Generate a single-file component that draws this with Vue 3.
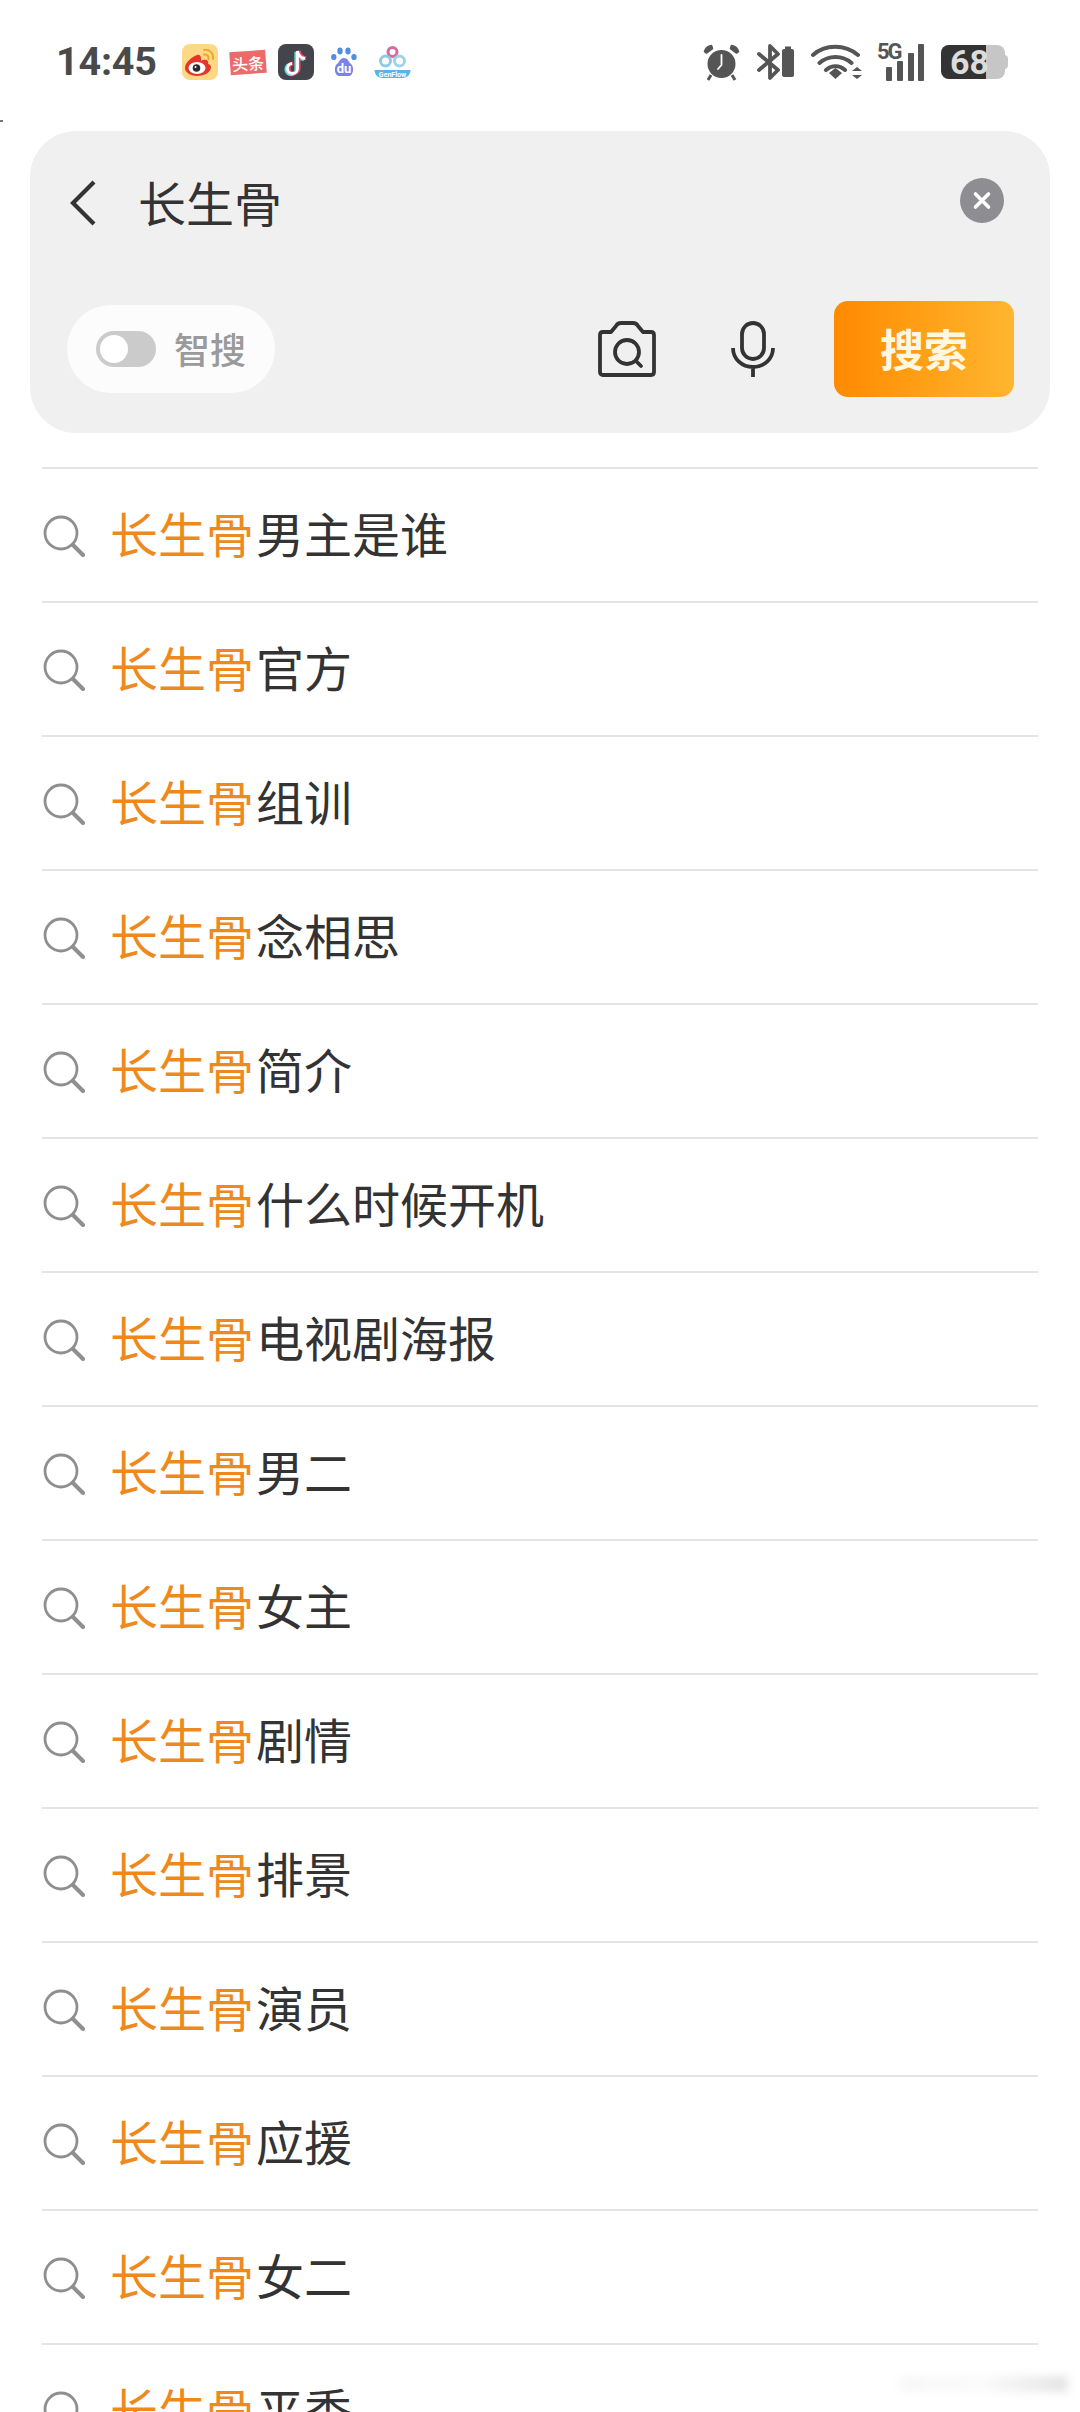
<script setup>
const rows = ['男主是谁','官方','组训','念相思','简介','什么时候开机','电视剧海报','男二','女主','剧情','排景','演员','应援','女二','平秀']
</script>

<template>
  <div class="page">
    <header class="status">
      <span class="time">14:45</span>
      <div class="apps">
        <svg class="ic weibo" viewBox="0 0 36 36">
          <rect width="36" height="36" rx="8" fill="#fdd985"/>
          <path d="M15 11c-6 2-12 8-12 13 0 4 5 8 12 8 8 0 14-4 14-9 0-2-2-3-3-3 1-3-1-5-5-4-1 0-2 1-2 1 .5-5-1-7-4-6z" fill="#e6352b"/>
          <ellipse cx="15" cy="24" rx="8.500" ry="6" fill="#fff"/>
          <circle cx="14.500" cy="24" r="3.800" fill="#2b2b2b"/>
          <circle cx="13.500" cy="23" r="1" fill="#fff"/>
          <path d="M22 6c5-1 10 3 9 9M22 10.500c3-.5 5 1.500 4.500 4.500" fill="none" stroke="#eda62b" stroke-width="2" stroke-linecap="round"/>
        </svg>
        <div class="toutiao"><span>头条</span></div>
        <svg class="ic tiktok" viewBox="0 0 36 36">
          <rect width="36" height="36" rx="8" fill="#44444c"/>
          <path d="M19.500 7v17.500a5 5 0 1 1-5.500-5M19.500 7c.5 4 3.500 7 7.500 7.500" fill="none" stroke="#5ee5e0" stroke-width="3.800" transform="translate(-1.200 .8)"/>
          <path d="M19.500 7v17.500a5 5 0 1 1-5.500-5M19.500 7c.5 4 3.500 7 7.500 7.500" fill="none" stroke="#f0476b" stroke-width="3.800" transform="translate(1.200 -.2)"/>
          <path d="M19.500 7v17.500a5 5 0 1 1-5.500-5M19.500 7c.5 4 3.500 7 7.500 7.500" fill="none" stroke="#fff" stroke-width="2.800"/>
        </svg>
        <svg class="ic baidu" viewBox="0 0 26 30">
          <ellipse cx="2.800" cy="10" rx="2.700" ry="3.100" fill="#4f8de8"/>
          <ellipse cx="9" cy="4" rx="2.700" ry="3.400" fill="#4f8de8"/>
          <ellipse cx="17" cy="4" rx="2.700" ry="3.400" fill="#4f8de8"/>
          <ellipse cx="23" cy="10" rx="2.700" ry="3.100" fill="#4f8de8"/>
          <path d="M13 11c-4 0-4.500 4-7 6-3.500 2.500-2.500 12 2 12h10c4.500 0 5.500-9.500 2-12-2.500-2-3-6-7-6z" fill="#7d83e6"/>
          <text x="13" y="26" text-anchor="middle" class="du">du</text>
        </svg>
        <svg class="ic genflow" viewBox="0 0 36 33">
          <circle cx="18" cy="6" r="4.500" fill="none" stroke="#d66a9a" stroke-width="3"/>
          <circle cx="11" cy="15" r="5" fill="none" stroke="#8fcbe6" stroke-width="3"/>
          <circle cx="25" cy="15" r="5" fill="none" stroke="#9ed3e8" stroke-width="3"/>
          <path d="M0 24h36c0 5-4 8-8 8H8c-4 0-8-3-8-8z" fill="#5cb3ea"/>
          <text x="18" y="30.500" text-anchor="middle" class="gf">GenFlow</text>
        </svg>
      </div>
      <div class="sys">
        <svg class="alarm" viewBox="0 0 37 38">
          <circle cx="18.500" cy="21" r="14" fill="#555"/>
          <path d="M1.500 8.500c1-3.500 3.500-5.500 7-6l1 3-6 4.500zM35.500 8.500c-1-3.500-3.500-5.500-7-6l-1 3 6 4.500z" fill="#555" stroke="#555" stroke-width="1.600" stroke-linejoin="round"/>
          <path d="M8 32l-3 5M29 32l3 5" stroke="#555" stroke-width="3"/>
          <path d="M18.500 12v10l-3.500 4" fill="none" stroke="#fff" stroke-width="1.800" stroke-linecap="round"/>
        </svg>
        <svg class="bt" viewBox="0 0 38 38">
          <path d="M2 11l19 16-8 8V3l8 8L2 27" fill="none" stroke="#555" stroke-width="3.800" stroke-linecap="round" stroke-linejoin="round"/>
          <rect x="25" y="6" width="12" height="28" rx="2" fill="#555"/>
          <rect x="28" y="3.500" width="6" height="3" fill="#555"/>
        </svg>
        <svg class="wifi" viewBox="0 0 52 38">
          <path d="M2 12c12-11 32-11 45 0M8.500 20c9-8 23-8 32 0M15 27c6-5 13-5 19 0" fill="none" stroke="#555" stroke-width="4" stroke-linecap="round"/>
          <path d="M18 30l6.500-5 6.500 5-6.500 6z" fill="#555"/>
          <path d="M41 28l5-4 5 4zM41 32l5 4 5-4z" fill="#555"/>
        </svg>
        <div class="signal">
          <span class="five">5G</span>
          <svg viewBox="0 0 40 37">
            <rect x="1" y="23" width="6" height="14" rx="1" fill="#555"/>
            <rect x="12" y="17" width="6" height="20" rx="1" fill="#555"/>
            <rect x="23" y="9" width="6" height="28" rx="1" fill="#555"/>
            <rect x="33" y="0" width="6" height="37" rx="1" fill="#555"/>
          </svg>
        </div>
        <div class="battery">
          <div class="fill"></div>
          <div class="tip"></div>
          <span>68</span>
        </div>
      </div>
    </header>

    <section class="panel">
      <div class="query">
        <svg class="back" viewBox="0 0 28 46">
          <path d="M25 2L4 23l21 21" fill="none" stroke="#333" stroke-width="4.200"/>
        </svg>
        <span class="q">长生骨</span>
        <div class="clear">
          <svg viewBox="0 0 44 45">
            <path d="M15.500 16l13 13M28.500 16l-13 13" stroke="#fff" stroke-width="3.600" stroke-linecap="round"/>
          </svg>
        </div>
      </div>
      <div class="tools">
        <div class="pill">
          <div class="switch"><div class="knob"></div></div>
          <span>智搜</span>
        </div>
        <div class="actions">
          <svg class="cam" viewBox="0 0 60 56">
            <path d="M3 14c0-2 1-3 3-3h8l5-6c1-2 3-3 5-3h12c2 0 4 1 5 3l5 6h8c2 0 3 1 3 3v37c0 2-1 3-3 3H6c-2 0-3-1-3-3z" fill="none" stroke="#333" stroke-width="3.800" stroke-linejoin="round"/>
            <circle cx="30" cy="31" r="12" fill="none" stroke="#333" stroke-width="3.800"/>
            <path d="M39 40l5 5" stroke="#333" stroke-width="3.800" stroke-linecap="round"/>
          </svg>
          <svg class="mic" viewBox="0 0 44 56">
            <rect x="11" y="2" width="22" height="36" rx="11" fill="none" stroke="#333" stroke-width="3.800"/>
            <path d="M2 27c0 11 9 19 20 19s20-8 20-19M22 46v10" fill="none" stroke="#333" stroke-width="3.800"/>
          </svg>
          <button class="go">搜索</button>
        </div>
      </div>
    </section>

    <ul class="list">
      <li v-for="r in rows" :key="r" class="row">
        <svg class="mag" viewBox="0 0 42 42">
          <circle cx="18" cy="18" r="16" fill="none" stroke="#8f8f8f" stroke-width="2.800"/>
          <path d="M30 30l10 10" stroke="#8f8f8f" stroke-width="4" stroke-linecap="round"/>
        </svg>
        <span class="txt"><em>长生骨</em>{{ r }}</span>
      </li>
    </ul>
    <div class="speck"></div>
    <div class="smudge"></div>
  </div>
</template>

<style>
html, body { margin: 0; background: #fff; }
</style>

<style scoped>
.page {
  position: relative;
  width: 1080px;
  height: 2412px;
  overflow: hidden;
  background: #fff;
  font-family: "Noto Sans CJK SC", "Noto Sans", sans-serif;
}
.status {
  box-sizing: border-box;
  height: 131px;
  padding: 0 75px 7px 56px;
  display: flex;
  align-items: center;
}
.time {
  font: 700 39.500px/1 Roboto, sans-serif;
  color: #4a4a4a;
  width: 126px;
  letter-spacing: -.2px;
}
.apps {
  display: flex;
  align-items: center;
  flex: 1;
}
.ic { display: block; }
.weibo { width: 36px; height: 36px; }
.toutiao {
  width: 36px;
  height: 23px;
  margin-left: 12px;
  background: #ee6a6a;
  transform: rotate(-4deg);
  display: flex;
  align-items: center;
  justify-content: center;
}
.toutiao span { font-size: 16px; line-height: 1; font-weight: 500; color: #fff; }
.tiktok { width: 36px; height: 36px; margin-left: 12px; }
.baidu { width: 26px; height: 30px; margin-left: 17px; }
.genflow { width: 37px; height: 33px; margin-left: 17px; }
.du { font: 700 13px Roboto, sans-serif; fill: #fff; }
.gf { font: 700 7px Roboto, sans-serif; fill: #fff; }
.sys { display: flex; align-items: center; }
.alarm { width: 37px; height: 38px; }
.bt { width: 38px; height: 38px; margin-left: 17px; }
.wifi { width: 52px; height: 38px; margin-left: 16px; }
.signal { position: relative; width: 48px; height: 37px; margin-left: 14px; }
.signal svg { position: absolute; right: 0; top: 0; width: 40px; height: 37px; }
.five {
  position: absolute;
  left: 0;
  top: -3px;
  font: 700 22px/1 Roboto, sans-serif;
  letter-spacing: -2px;
  color: #555;
  background: #fff;
  padding-right: 1px;
}
.battery {
  position: relative;
  margin-left: 16px;
  width: 64px;
  height: 34px;
  display: flex;
  align-items: center;
  justify-content: center;
  border-radius: 8px;
  background: #c6c6c6;
}
.fill { position: absolute; left: 0; top: 0; bottom: 0; width: 45px; background: #333; border-radius: 8px 0 0 8px; }
.tip { position: absolute; right: -3px; top: 10px; width: 4px; height: 14px; background: #c6c6c6; border-radius: 0 4px 4px 0; }
.battery span {
  position: relative;
  font: 700 34px/1 Roboto, sans-serif;
  color: #dcdcdc;
  margin-left: -7px;
}
.panel {
  box-sizing: border-box;
  margin: 0 30px;
  height: 302px;
  padding: 41px 36px 36px 37px;
  background: #f0f0f0;
  border-radius: 46px;
  display: flex;
  flex-direction: column;
  justify-content: space-between;
}
.query { display: flex; align-items: center; height: 62px; }
.back { width: 28px; height: 46px; margin-left: 2px; }
.q { font-size: 48px; line-height: 62px; color: #333; margin-left: 41px; flex: 1; margin-top: -4px; }
.clear {
  width: 44px;
  height: 45px;
  margin-right: 10px;
  margin-top: -6px;
  border-radius: 50%;
  background: #8e8e92;
}
.clear svg { display: block; width: 44px; height: 45px; }
.tools { display: flex; align-items: center; justify-content: space-between; }
.pill {
  box-sizing: border-box;
  width: 208px;
  height: 88px;
  padding-left: 29px;
  border-radius: 44px;
  background: #fcfcfc;
  display: flex;
  align-items: center;
}
.pill span { font-size: 36px; line-height: 1; font-weight: 500; color: #9a9a9a; margin-left: 18px; margin-top: -2px; }
.switch {
  box-sizing: border-box;
  width: 60px;
  height: 36px;
  padding: 4px;
  border-radius: 18px;
  background: #cbcbcb;
}
.knob { width: 28px; height: 28px; border-radius: 50%; background: #fff; }
.actions { display: flex; align-items: center; }
.cam { width: 60px; height: 56px; margin-right: 74px; }
.mic { width: 44px; height: 56px; margin-right: 59px; }
.go {
  width: 180px;
  height: 96px;
  padding: 0 0 3px;
  border: 0;
  border-radius: 14px;
  background: linear-gradient(90deg, #ff8a00, #ffb62f);
  color: #fff7e0;
  font: 700 44px/1 "Noto Sans CJK SC", sans-serif;
}
.list { list-style: none; margin: 34px 42px 0; padding: 0; }
.row {
  box-sizing: border-box;
  height: 134px;
  border-top: 2px solid #e4e4e4;
  display: flex;
  align-items: center;
}
.mag { width: 42px; height: 42px; flex: none; margin: 2px 0 0 1px; }
.txt { margin-left: 25px; font-size: 48px; line-height: 1; color: #333; white-space: nowrap; margin-top: -7px; }
.txt em { font-style: normal; color: #ee8a1d; margin-right: 2px; }
.speck { position: absolute; left: 0; top: 120px; width: 3px; height: 2px; background: #777; }
.smudge {
  position: absolute;
  left: 900px;
  top: 2376px;
  width: 168px;
  height: 16px;
  background: linear-gradient(90deg, #f8f8f8, #fafafa 50%, #e4e4e4);
  filter: blur(4px);
}
</style>
